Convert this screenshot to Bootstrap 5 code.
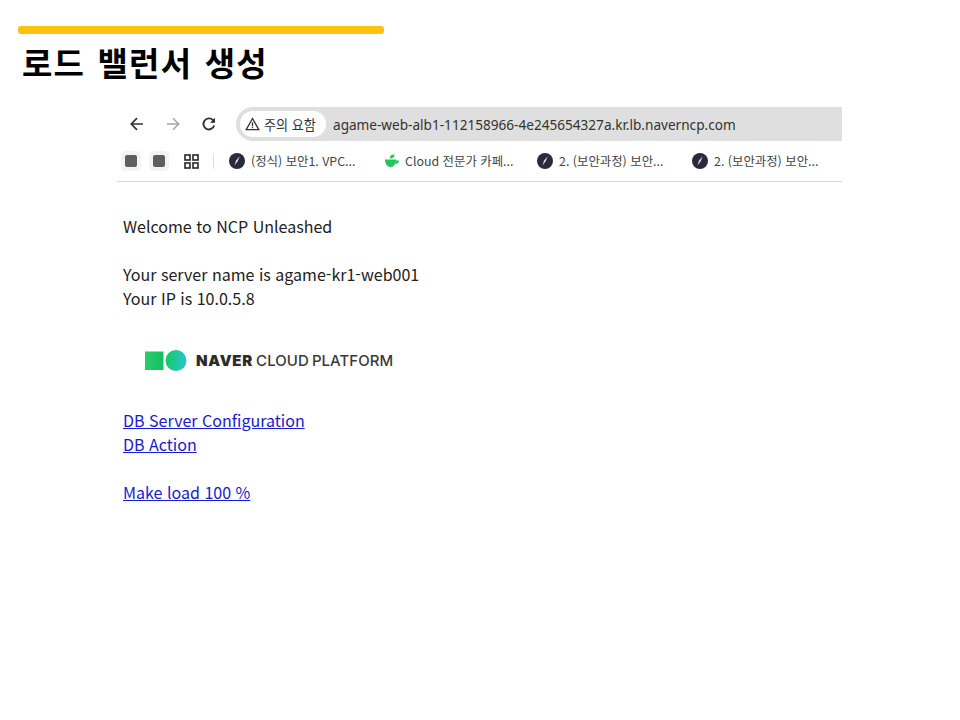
<!DOCTYPE html>
<html lang="ko"><head><meta charset="utf-8"><title>로드 밸런서 생성</title>
<link href="https://cdn.jsdelivr.net/npm/bootstrap@5.3.0/dist/css/bootstrap.min.css" rel="stylesheet">
<style>
html,body{height:100%;background:#fff}
.slide{width:960px;height:720px;overflow:hidden;padding:26px 0 0 18px}
.accent-bar{width:366px;height:8px;background:#ffc20e;border-radius:3px}
.slide-title{font:700 33px/40px "Noto Sans CJK KR",sans-serif;letter-spacing:1.2px;word-spacing:2px;margin:8px 0 0 4px;color:#000;height:40px}
.shot{width:725px;margin:25px 0 0 99px}
.toolbar{height:34px;padding-left:12px}
.nav-ico{width:16px;height:16px;flex:none;margin-right:20px}
.omni{flex:1;height:34px;background:#dfdfdf;border-radius:17px 0 0 17px;margin-left:-1px;padding-left:4px;font:400 13.6px "Noto Sans",sans-serif;color:#333}
.warn-chip{height:26px;width:86px;background:#fff;border-radius:13px;padding-left:5px;gap:4px;font:400 13.1px "Noto Sans CJK KR",sans-serif;margin-right:7px;color:#333;white-space:nowrap}
.bm-row{height:41px;border-bottom:1px solid #d8d8d8;padding:0 0 0 4px;font:400 12.4px "Noto Sans CJK KR",sans-serif;color:#444;white-space:nowrap}
.bm-chip{width:20px;height:20px;background:#f1f3f4;border-radius:5px;flex:none;margin-right:8px}
.bm-chip i{width:12px;height:12px;background:#5c5f60;border-radius:2px}
.bm-grid{flex:none;margin-left:7px}
.bm-sep{flex:none;width:1px;height:15px;background:#eed9dc;margin:0 15px 0 14px}
.bm-item{gap:6px;flex:none;width:155px}
.bm-item.bm-narrow{width:153px;gap:5px}
.bm-dot{width:16px;height:16px;flex:none}
.page-body{padding:32px 0 0 6px;font:400 16.05px/24px "Noto Sans CJK KR",sans-serif;color:#222}
.page-body a{color:#1a1ad0;text-decoration:underline}
.txt-line,.gap-line{height:24px}
.ncp-logo{height:98px;padding:3px 0 0 22px;gap:9px}
.ncp-word{font:500 15px "Inter",sans-serif;color:#3a3a3a;letter-spacing:.05px;white-space:nowrap;word-spacing:-1px}
.ncp-word b{font:900 15px "Inter",sans-serif;color:#2b2b2b;letter-spacing:.75px}
</style></head>
<body>
<div class="slide">
  <div class="accent-bar"></div>
  <h1 class="slide-title">로드 밸런서 생성</h1>
  <div class="shot">
    <div class="toolbar d-flex align-items-center">
      <svg class="nav-ico" viewBox="0 0 16 16" fill="none" stroke="#333" stroke-width="1.700"><path d="M14 8H2.500M8 2.200 2.300 8 8 13.800"/></svg>
      <svg class="nav-ico" viewBox="0 0 16 16" fill="none" stroke="#a6a6a6" stroke-width="1.500"><path d="M2 8h11.500M8 2.200 13.700 8 8 13.800"/></svg>
      <svg class="nav-ico" viewBox="0 0 16 16" fill="none" stroke="#333" stroke-width="1.900"><path d="M13.200 9.500A5.500 5.500 0 1 1 12 4.200L13.600 6"/><path d="M14 1.800v5H9z" fill="#333" stroke="none"/></svg>
      <div class="omni d-flex align-items-center">
        <div class="warn-chip d-flex align-items-center">
          <svg width="15" height="14" viewBox="0 0 15 14" fill="none" stroke="#333" stroke-width="1.300"><path d="M7.500 1.500 1.200 12.600h12.600z"/><path d="M7.500 5.200v4M7.500 10v1.300"/></svg>
          <span>주의 요함</span>
        </div>
        <span>agame-web-alb1-112158966-4e245654327a.kr.lb.naverncp.com</span>
      </div>
    </div>
    <div class="bm-row d-flex align-items-center">
      <div class="bm-chip d-flex align-items-center justify-content-center"><i></i></div>
      <div class="bm-chip d-flex align-items-center justify-content-center"><i></i></div>
      <svg class="bm-grid" width="15" height="15" viewBox="0 0 15 15" fill="none" stroke="#333" stroke-width="1.700"><rect x="1" y="1" width="5" height="5"/><rect x="9" y="1" width="5" height="5"/><rect x="1" y="9" width="5" height="5"/><rect x="9" y="9" width="5" height="5"/></svg>
      <div class="bm-sep"></div>
      <div class="bm-item d-flex align-items-center">
        <svg class="bm-dot" viewBox="0 0 16 16"><circle cx="8" cy="8" r="8" fill="#2a2a3c"/><path d="M10.800 3.200 7 7.500 5.500 12.500 8.500 8.500z" fill="#ddd"/></svg><span>(정식) 보안1. VPC...</span>
      </div>
      <div class="bm-item bm-narrow d-flex align-items-center">
        <svg class="bm-dot" viewBox="0 0 16 16"><path d="M1 6.500h11c0 4-2 7.500-5.500 7.500S1 10.500 1 6.500z" fill="#22c55e"/><path d="M12 7.500h3c0 2.200-1.500 3.500-3.700 3.500z" fill="#22c55e"/><path d="M6 5.500c-.5-2.500 1.500-4 4.500-4 0 2.500-1.500 4-4.500 4z" fill="#22c55e"/></svg><span>Cloud 전문가 카페...</span>
      </div>
      <div class="bm-item d-flex align-items-center">
        <svg class="bm-dot" viewBox="0 0 16 16"><circle cx="8" cy="8" r="8" fill="#2a2a3c"/><path d="M10.800 3.200 7 7.500 5.500 12.500 8.500 8.500z" fill="#ddd"/></svg><span>2. (보안과정) 보안...</span>
      </div>
      <div class="bm-item d-flex align-items-center">
        <svg class="bm-dot" viewBox="0 0 16 16"><circle cx="8" cy="8" r="8" fill="#2a2a3c"/><path d="M10.800 3.200 7 7.500 5.500 12.500 8.500 8.500z" fill="#ddd"/></svg><span>2. (보안과정) 보안...</span>
      </div>
    </div>
    <div class="page-body">
      <div class="txt-line">Welcome to NCP Unleashed</div>
      <div class="gap-line"></div>
      <div class="txt-line">Your server name is agame-kr1-web001</div>
      <div class="txt-line">Your IP is 10.0.5.8</div>
      <div class="ncp-logo d-flex align-items-center">
        <svg width="42" height="21" viewBox="0 0 42 21"><defs><linearGradient id="ncpg" x1="0" x2="1" y1="0" y2="0"><stop offset="0" stop-color="#17c964"/><stop offset="1" stop-color="#2ac4d0"/></linearGradient><linearGradient id="ncps" x1="0" x2="1" y1="0" y2="0"><stop offset="0" stop-color="#2acb72"/><stop offset="1" stop-color="#12c060"/></linearGradient></defs><rect x="0" y="1.500" width="18.500" height="18.500" fill="url(#ncps)"/><circle cx="31" cy="10.500" r="10.500" fill="url(#ncpg)"/></svg>
        <span class="ncp-word"><b>NAVER</b> CLOUD PLATFORM</span>
      </div>
      <div class="txt-line"><a href="#">DB Server Configuration</a></div>
      <div class="txt-line"><a href="#">DB Action</a></div>
      <div class="gap-line"></div>
      <div class="txt-line"><a href="#">Make load 100 %</a></div>
    </div>
  </div>
</div>
<script src="https://cdn.jsdelivr.net/npm/bootstrap@5.3.0/dist/js/bootstrap.bundle.min.js"></script>
</body></html>
